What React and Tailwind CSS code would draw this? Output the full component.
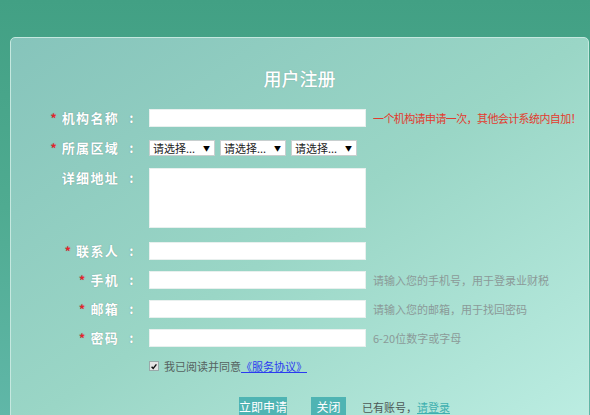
const cjk = "font-['Noto_Sans_CJK_SC','Liberation_Sans',sans-serif]";

const inputCls = 'h-[18px] w-[217px] shrink-0 bg-white border border-[#e8f0ee]';
const labelCls = 'text-[13px] font-bold tracking-[1.3px] text-white [text-shadow:0_0_1px_rgba(60,90,90,0.5)]';

function Label({ text, required }) {
  return (
    <div className="flex w-[138px] shrink-0 items-center">
      <div className={`w-[108px] text-right leading-[18px] ${labelCls}`}>
        {required && <span className="mr-[4px] text-[12px] text-[#e8232b]">*</span>}
        {text}
      </div>
      <div className={`flex-1 pr-[4px] text-center leading-[18px] ${labelCls}`}>:</div>
    </div>
  );
}

function Row({ label, required, hint, hintCls = 'text-[#8b9a98]', className = '' }) {
  return (
    <div className={`flex h-[18px] items-center ${className}`}>
      <Label text={label} required={required} />
      <div className={inputCls} />
      {hint && <span className={`ml-[7px] whitespace-nowrap text-[11px] ${hintCls}`}>{hint}</span>}
    </div>
  );
}

function Select() {
  return (
    <div className="flex h-[16px] w-[66px] items-center justify-between border border-[#c8cfcf] bg-white pl-[3px] pr-[4px]">
      <span className="text-[11px] leading-none text-[#222]">请选择...</span>
      <span className="text-[7px] leading-none text-black">▼</span>
    </div>
  );
}

export default function App() {
  return (
    <div className={`h-[415px] w-[590px] overflow-hidden bg-linear-to-b from-[#42a084] via-[#4fab91] to-[#60b7a8] pl-[10px] pt-[37px] ${cjk}`}>
      <div className="h-[400px] w-[579px] rounded-t-[5px] border border-[#c5e8df] bg-linear-to-br from-[#86c4bb] via-[#9ad6c6] to-[#bdeee3]">
        <h1 className="mt-[28px] h-[24px] text-center text-[18px] font-medium leading-[24px] text-white [text-shadow:0_0_1px_rgba(60,90,90,0.4)]">
          用户注册
        </h1>

        <Row
          label="机构名称"
          required
          className="mt-[19px]"
          hint="一个机构请申请一次，其他会计系统内自加！"
          hintCls="text-[#e33a2e] tracking-[-0.6px]"
        />

        <div className="mt-[13px] flex h-[16px] items-center">
          <Label text="所属区域" required />
          <div className="flex gap-[5px]">
            <Select />
            <Select />
            <Select />
          </div>
        </div>

        <div className="mt-[12px] flex items-start">
          <div className="pt-[1px]">
            <Label text="详细地址" />
          </div>
          <div className="h-[60px] w-[217px] border border-[#e8f0ee] bg-white" />
        </div>

        <Row label="联系人" required className="mt-[14px]" />
        <Row label="手机" required className="mt-[11px]" hint="请输入您的手机号，用于登录业财税" />
        <Row label="邮箱" required className="mt-[11px]" hint="请输入您的邮箱，用于找回密码" />
        <Row label="密码" required className="mt-[11px]" hint="6-20位数字或字母" />

        <div className="mt-[12px] flex h-[14px] items-center pl-[138px]">
          <div className="flex h-[10px] w-[10px] items-center justify-center border border-[#9aa] bg-[#e4e4e4]">
            <svg viewBox="0 0 10 10" className="h-[9px] w-[9px]">
              <path d="M2 5.2 L4 7.4 L8 2.4" fill="none" stroke="#111" strokeWidth="1.8" />
            </svg>
          </div>
          <span className="ml-[5px] text-[11px] text-[#55625f]">我已阅读并同意</span>
          <a href="#" className="text-[11px] text-[#2b3bf0] underline">《服务协议》</a>
        </div>

        <div className="mt-[24px] flex h-[20px] items-center pl-[228px]">
          <button className="h-[20px] w-[48px] bg-[#4fb4b3] text-[12px] text-white">立即申请</button>
          <button className="ml-[24px] h-[20px] w-[35px] bg-[#4fb4b3] text-[12px] text-white">关闭</button>
          <span className="ml-[16px] text-[11px] text-[#4d5856]">已有账号，</span>
          <a href="#" className="text-[11px] text-[#3fb0b0] underline">请登录</a>
        </div>
      </div>
    </div>
  );
}
